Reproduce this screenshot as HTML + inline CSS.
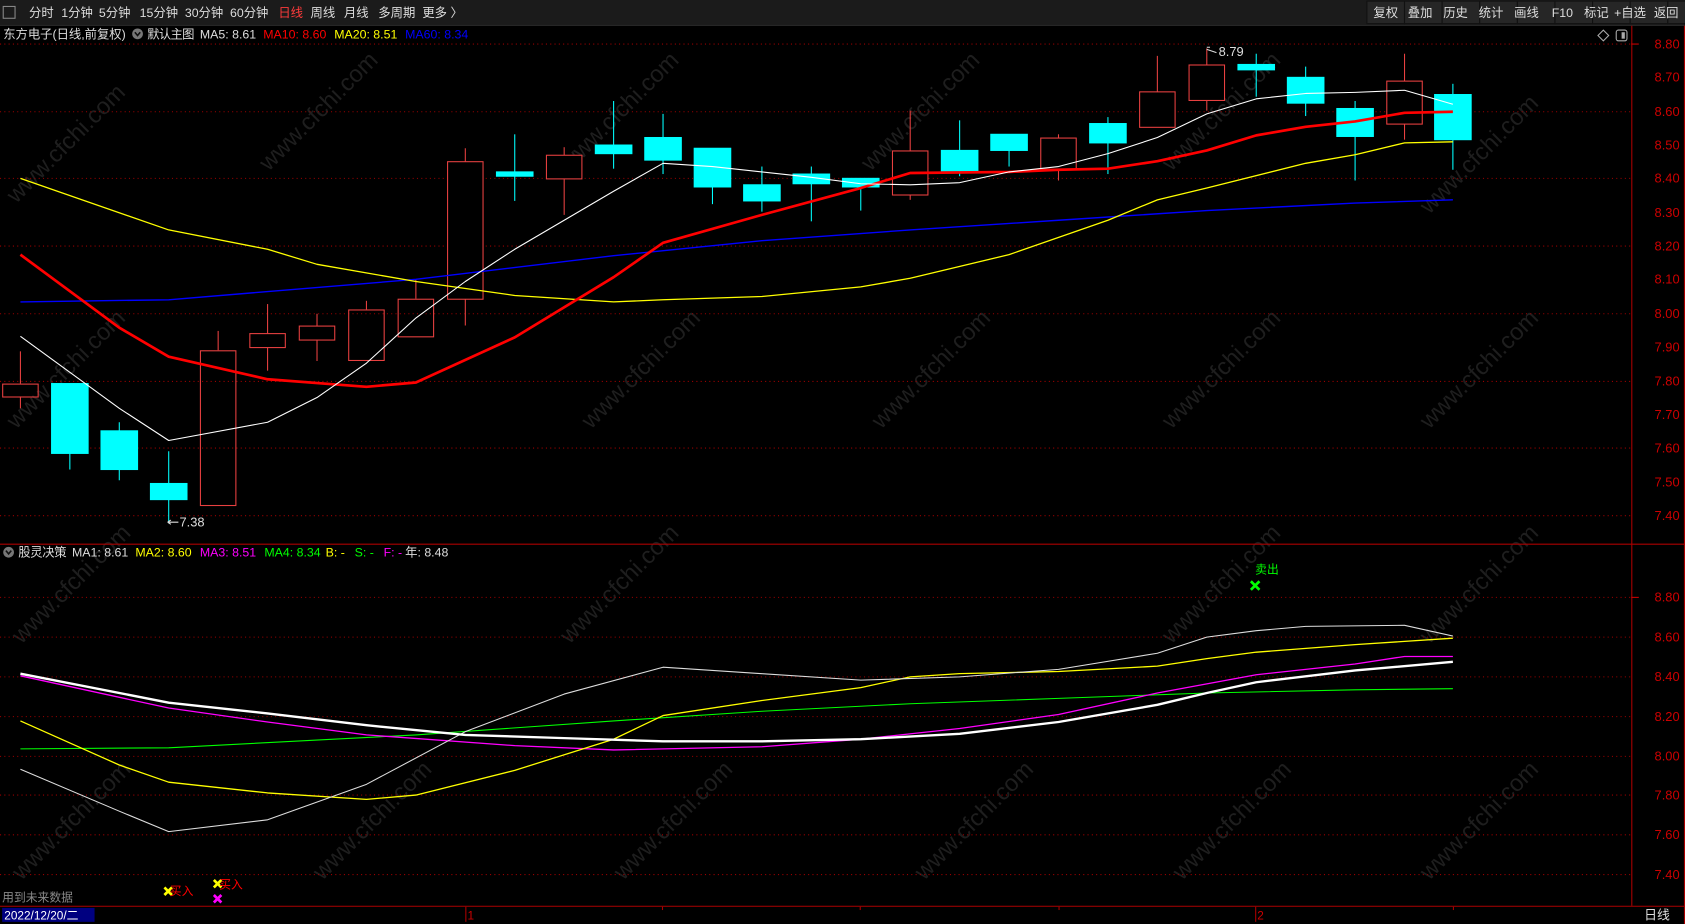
<!DOCTYPE html>
<html><head><meta charset="utf-8"><style>
html,body{margin:0;padding:0;background:#000;width:1685px;height:924px;overflow:hidden}
svg{display:block}
text{font-family:"Liberation Sans","Noto Sans CJK SC",sans-serif;font-size:12px}
.h text{font-size:11.5px}
.wm{font-size:22px;fill:#1e1e1e}
</style></head><body>
<svg width="1685" height="924" viewBox="0 0 1568 860" preserveAspectRatio="none" xmlns="http://www.w3.org/2000/svg">
<rect width="1568" height="860" fill="#000"/>
<!-- watermarks -->
<g class="wm" style="font-size:22px" fill="#1e1e1e">
<text transform="translate(15,190) rotate(-45)" style="font-size:22px;fill:#1e1e1e">www.cfchi.com</text>
<text transform="translate(250,160) rotate(-45)" style="font-size:22px;fill:#1e1e1e">www.cfchi.com</text>
<text transform="translate(530,160) rotate(-45)" style="font-size:22px;fill:#1e1e1e">www.cfchi.com</text>
<text transform="translate(810,160) rotate(-45)" style="font-size:22px;fill:#1e1e1e">www.cfchi.com</text>
<text transform="translate(1090,160) rotate(-45)" style="font-size:22px;fill:#1e1e1e">www.cfchi.com</text>
<text transform="translate(1330,200) rotate(-45)" style="font-size:22px;fill:#1e1e1e">www.cfchi.com</text>
<text transform="translate(15,400) rotate(-45)" style="font-size:22px;fill:#1e1e1e">www.cfchi.com</text>
<text transform="translate(550,400) rotate(-45)" style="font-size:22px;fill:#1e1e1e">www.cfchi.com</text>
<text transform="translate(820,400) rotate(-45)" style="font-size:22px;fill:#1e1e1e">www.cfchi.com</text>
<text transform="translate(1090,400) rotate(-45)" style="font-size:22px;fill:#1e1e1e">www.cfchi.com</text>
<text transform="translate(1330,400) rotate(-45)" style="font-size:22px;fill:#1e1e1e">www.cfchi.com</text>
<text transform="translate(20,600) rotate(-45)" style="font-size:22px;fill:#1e1e1e">www.cfchi.com</text>
<text transform="translate(530,600) rotate(-45)" style="font-size:22px;fill:#1e1e1e">www.cfchi.com</text>
<text transform="translate(1090,600) rotate(-45)" style="font-size:22px;fill:#1e1e1e">www.cfchi.com</text>
<text transform="translate(1330,600) rotate(-45)" style="font-size:22px;fill:#1e1e1e">www.cfchi.com</text>
<text transform="translate(20,820) rotate(-45)" style="font-size:22px;fill:#1e1e1e">www.cfchi.com</text>
<text transform="translate(300,820) rotate(-45)" style="font-size:22px;fill:#1e1e1e">www.cfchi.com</text>
<text transform="translate(580,820) rotate(-45)" style="font-size:22px;fill:#1e1e1e">www.cfchi.com</text>
<text transform="translate(860,820) rotate(-45)" style="font-size:22px;fill:#1e1e1e">www.cfchi.com</text>
<text transform="translate(1100,820) rotate(-45)" style="font-size:22px;fill:#1e1e1e">www.cfchi.com</text>
<text transform="translate(1330,820) rotate(-45)" style="font-size:22px;fill:#1e1e1e">www.cfchi.com</text>
</g>
<!-- toolbar -->
<rect x="0" y="0" width="1568" height="23" fill="#1b1b1b"/>
<line x1="0" y1="23.5" x2="1568" y2="23.5" stroke="#333"/>
<rect x="3" y="6" width="11" height="11" fill="none" stroke="#888"/>
<g fill="#ddd" class="h">
<text x="27" y="16">分时</text><text x="57" y="16">1分钟</text><text x="92" y="16">5分钟</text><text x="130" y="16">15分钟</text><text x="172" y="16">30分钟</text><text x="214" y="16">60分钟</text>
<text x="259" y="16" fill="#ff3b3b">日线</text><text x="289" y="16">周线</text><text x="320" y="16">月线</text><text x="352" y="16">多周期</text><text x="393" y="16">更多 〉</text>
</g>
<g fill="#262626" stroke="#111">
<rect x="1272" y="1" width="35" height="21"/><rect x="1307" y="1" width="35" height="21"/><rect x="1342" y="1" width="35" height="21"/><rect x="1377" y="1" width="35" height="21"/><rect x="1412" y="1" width="35" height="21"/><rect x="1447" y="1" width="35" height="21"/><rect x="1482" y="1" width="35" height="21"/><rect x="1517" y="1" width="35" height="21"/><rect x="1552" y="1" width="20" height="21"/>
</g>
<g fill="#ddd" class="h">
<text x="1278" y="16">复权</text><text x="1310" y="16">叠加</text><text x="1343" y="16">历史</text><text x="1376" y="16">统计</text><text x="1409" y="16">画线</text><text x="1444" y="16">F10</text><text x="1474" y="16">标记</text><text x="1502" y="16">+自选</text><text x="1539" y="16">返回</text>
</g>
<!-- header main -->
<g class="h">
<text x="3" y="36" fill="#ddd" textLength="114">东方电子(日线,前复权)</text>
<text x="137" y="36" fill="#ddd" textLength="44">默认主图</text>
<text x="186" y="36" fill="#ddd">MA5: 8.61</text>
<text x="245" y="36" fill="#f00">MA10: 8.60</text>
<text x="311" y="36" fill="#ff0">MA20: 8.51</text>
<text x="377" y="36" fill="#00f">MA60: 8.34</text>
</g>
<circle cx="128" cy="31.5" r="5" fill="#777"/><path d="M125.5 30 L128 33 L130.5 30" stroke="#111" stroke-width="1.5" fill="none"/>
<path d="M1492 28 L1497 33 L1492 38 L1487 33 Z" fill="none" stroke="#aaa"/>
<rect x="1504" y="28" width="10" height="10" rx="2" fill="none" stroke="#aaa"/><rect x="1509" y="30" width="3" height="6" fill="#aaa"/>
<!-- axis -->
<line x1="1518.5" y1="24" x2="1518.5" y2="843" stroke="#a00"/>
<line x1="1567.5" y1="24" x2="1567.5" y2="860" stroke="#a00"/>
<line x1="0" y1="506.5" x2="1568" y2="506.5" stroke="#a00"/>
<line x1="0" y1="843.5" x2="1568" y2="843.5" stroke="#a00"/>
<g stroke="#900" stroke-dasharray="1,3">
<line x1="0" y1="41" x2="1518" y2="41"/><line x1="0" y1="104" x2="1518" y2="104"/><line x1="0" y1="166" x2="1518" y2="166"/><line x1="0" y1="229" x2="1518" y2="229"/><line x1="0" y1="292" x2="1518" y2="292"/><line x1="0" y1="355" x2="1518" y2="355"/><line x1="0" y1="417" x2="1518" y2="417"/><line x1="0" y1="480" x2="1518" y2="480"/>
<line x1="0" y1="556" x2="1518" y2="556"/><line x1="0" y1="593" x2="1518" y2="593"/><line x1="0" y1="630" x2="1518" y2="630"/><line x1="0" y1="667" x2="1518" y2="667"/><line x1="0" y1="704" x2="1518" y2="704"/><line x1="0" y1="740" x2="1518" y2="740"/><line x1="0" y1="777" x2="1518" y2="777"/><line x1="0" y1="814" x2="1518" y2="814"/>
</g>
<g fill="#c00" text-anchor="end">
<text x="1563" y="45">8.80</text><text x="1563" y="76">8.70</text><text x="1563" y="108">8.60</text><text x="1563" y="139">8.50</text><text x="1563" y="170">8.40</text><text x="1563" y="202">8.30</text><text x="1563" y="233">8.20</text><text x="1563" y="264">8.10</text><text x="1563" y="296">8.00</text><text x="1563" y="327">7.90</text><text x="1563" y="359">7.80</text><text x="1563" y="390">7.70</text><text x="1563" y="421">7.60</text><text x="1563" y="453">7.50</text><text x="1563" y="484">7.40</text>
<text x="1563" y="560">8.80</text><text x="1563" y="597">8.60</text><text x="1563" y="634">8.40</text><text x="1563" y="671">8.20</text><text x="1563" y="708">8.00</text><text x="1563" y="744">7.80</text><text x="1563" y="781">7.60</text><text x="1563" y="818">7.40</text>
</g>
<g stroke="#c00"><line x1="1518" y1="41" x2="1525" y2="41"/><line x1="1518" y1="556" x2="1525" y2="556"/></g>
<!-- candles -->
<g stroke="#e84040" fill="none">
<line x1="19" y1="327" x2="19" y2="357"/><line x1="19" y1="369" x2="19" y2="380"/><rect x="2.5" y="357.5" width="33" height="12"/>
<line x1="203" y1="308" x2="203" y2="326"/><rect x="186.5" y="326.5" width="33" height="144"/>
<line x1="249" y1="283" x2="249" y2="345"/><rect x="232.5" y="310.5" width="33" height="13" fill="#000"/>
<line x1="295" y1="292" x2="295" y2="336"/><rect x="278.5" y="303.5" width="33" height="13" fill="#000"/>
<line x1="341" y1="280" x2="341" y2="288"/><rect x="324.5" y="288.5" width="33" height="47"/>
<line x1="387" y1="260" x2="387" y2="278"/><rect x="370.5" y="278.5" width="33" height="35"/>
<line x1="433" y1="138" x2="433" y2="303"/><rect x="416.5" y="150.5" width="33" height="128" fill="#000"/>
<line x1="525" y1="137" x2="525" y2="200"/><rect x="508.5" y="144.5" width="33" height="22" fill="#000"/>
<line x1="847" y1="103" x2="847" y2="186"/><rect x="830.5" y="140.5" width="33" height="41" fill="#000"/>
<line x1="985" y1="125" x2="985" y2="168"/><rect x="968.5" y="128.5" width="33" height="29" fill="#000"/>
<line x1="1077" y1="52" x2="1077" y2="118"/><rect x="1060.5" y="85.5" width="33" height="33" fill="#000"/>
<line x1="1123" y1="45" x2="1123" y2="103"/><rect x="1106.5" y="60.5" width="33" height="33" fill="#000"/>
<line x1="1307" y1="50" x2="1307" y2="130"/><rect x="1290.5" y="75.5" width="33" height="40" fill="#000"/>
</g>
<g stroke="#00ffff" fill="#00ffff">
<line x1="65" y1="357" x2="65" y2="437"/><rect x="48" y="357" width="34" height="65"/>
<line x1="111" y1="393" x2="111" y2="447"/><rect x="94" y="401" width="34" height="36"/>
<line x1="157" y1="420" x2="157" y2="487"/><rect x="140" y="450" width="34" height="15"/>
<line x1="479" y1="125" x2="479" y2="187"/><rect x="462" y="160" width="34" height="4"/>
<line x1="571" y1="94" x2="571" y2="157"/><rect x="554" y="135" width="34" height="8"/>
<line x1="617" y1="106" x2="617" y2="162"/><rect x="600" y="128" width="34" height="21"/>
<line x1="663" y1="138" x2="663" y2="190"/><rect x="646" y="138" width="34" height="36"/>
<line x1="709" y1="155" x2="709" y2="197"/><rect x="692" y="172" width="34" height="15"/>
<line x1="755" y1="155" x2="755" y2="206"/><rect x="738" y="162" width="34" height="9"/>
<line x1="801" y1="166" x2="801" y2="196"/><rect x="784" y="166" width="34" height="8"/>
<line x1="893" y1="112" x2="893" y2="164"/><rect x="876" y="140" width="34" height="19"/>
<line x1="939" y1="125" x2="939" y2="155"/><rect x="922" y="125" width="34" height="15"/>
<line x1="1031" y1="109" x2="1031" y2="162"/><rect x="1014" y="115" width="34" height="18"/>
<line x1="1169" y1="50" x2="1169" y2="90"/><rect x="1152" y="60" width="34" height="5"/>
<line x1="1215" y1="62" x2="1215" y2="108"/><rect x="1198" y="72" width="34" height="24"/>
<line x1="1261" y1="94" x2="1261" y2="168"/><rect x="1244" y="101" width="34" height="26"/>
<line x1="1352" y1="78" x2="1352" y2="158"/><rect x="1335" y="88" width="34" height="42"/>
</g>
<!-- MA lines main -->
<g fill="none" stroke-linejoin="round">
<polyline stroke="#00f" stroke-width="1.3" points="19,281 157,279 387,260 571,238 709,224 847,214 985,205 1123,196 1261,189 1352,186"/>
<polyline stroke="#ff0" stroke-width="1.2" points="19,166 157,214 249,232 295,246 387,262 479,275 571,281 617,279 709,276 801,267 847,259 939,237 1031,205 1077,186 1123,175 1215,152 1261,144 1307,133 1352,132"/>
<polyline stroke="#f00" stroke-width="2.5" points="19,237 111,305 157,332 249,353 341,360 387,356 479,314 571,258 617,226 709,200 801,175 847,161 939,160 985,158 1031,157 1077,150 1123,140 1169,126 1215,118 1261,113 1307,105 1352,104"/>
<polyline stroke="#fff" stroke-width="1" points="19,313 111,380 157,410 249,393 295,370 341,338 387,296 433,262 479,232 525,205 571,178 617,152 663,155 709,160 755,165 801,171 847,172 893,170 939,160 985,155 1031,143 1077,128 1123,106 1169,92 1215,87 1261,86 1307,84 1352,97"/>
</g>
<text x="167" y="490" fill="#ddd">7.38</text><path d="M156 486 H166 M156 486 l3 -2 M156 486 l3 2" stroke="#ddd"/>
<text x="1134" y="52" fill="#ddd">8.79</text><path d="M1123 46 l9 3 M1123 44 l3 0" stroke="#ddd"/>
<!-- lower header -->
<circle cx="8" cy="514" r="5" fill="#777"/><path d="M5.5 512.5 L8 515.5 L10.5 512.5" stroke="#111" stroke-width="1.5" fill="none"/>
<g class="h">
<text x="17" y="518" fill="#ddd" textLength="45">股灵决策</text>
<text x="67" y="518" fill="#ddd">MA1: 8.61</text>
<text x="126" y="518" fill="#ff0">MA2: 8.60</text>
<text x="186" y="518" fill="#f0f">MA3: 8.51</text>
<text x="246" y="518" fill="#0f0">MA4: 8.34</text>
<text x="303" y="518" fill="#ff0">B: -</text>
<text x="330" y="518" fill="#0f0">S: -</text>
<text x="357" y="518" fill="#f0f">F: -</text>
<text x="377" y="518" fill="#ddd">年: 8.48</text>
</g>
<!-- lower lines -->
<g fill="none" stroke-linejoin="round">
<polyline stroke="#0f0" stroke-width="1" points="19,697 157,696 387,684 571,671 709,662 847,655 985,650 1123,645 1261,642 1352,641"/>
<polyline stroke="#f0f" stroke-width="1.2" points="19,629 157,659 249,672 341,684 479,694 571,698 709,695 801,688 893,678 985,665 1077,645 1169,628 1261,618 1307,611 1352,611"/>
<polyline stroke="#ff0" stroke-width="1.2" points="19,671 111,712 157,728 249,738 341,744 387,740 479,717 571,688 617,666 709,652 801,640 847,630 893,627 985,625 1077,620 1123,613 1169,607 1261,600 1352,594"/>
<polyline stroke="#ddd" stroke-width="1" points="19,716 111,755 157,774 249,763 341,730 433,681 525,646 617,621 709,627 801,633 893,630 985,623 1077,608 1123,593 1169,587 1215,583 1307,582 1352,592"/>
<polyline stroke="#fff" stroke-width="2.2" points="19,627 157,654 249,664 341,675 433,684 525,687 617,690 709,690 801,688 893,683 985,672 1077,656 1123,645 1169,635 1261,624 1352,616"/>
</g>
<text x="1168" y="534" fill="#0f0" style="font-size:11px">卖出</text>
<path d="M1164 541 l8 8 M1172 541 l-8 8" stroke="#0f0" stroke-width="2.5"/>
<path d="M153 826 l7 7 M160 826 l-7 7" stroke="#ff0" stroke-width="2.5"/>
<text x="158" y="833" fill="#f00" style="font-size:11px">买入</text>
<path d="M199 819 l7 7 M206 819 l-7 7" stroke="#ff0" stroke-width="2.5"/>
<text x="204" y="827" fill="#f00" style="font-size:11px">买入</text>
<path d="M199 833 l7 7 M206 833 l-7 7" stroke="#f0f" stroke-width="2.5"/>
<text x="2" y="839" fill="#888" style="font-size:11px">用到未来数据</text>
<!-- bottom bar -->
<rect x="2" y="845" width="86" height="13" fill="#000080"/>
<text x="4" y="856" fill="#fff" style="font-size:11px">2022/12/20/二</text>
<line x1="433.5" y1="844" x2="433.5" y2="858" stroke="#a00"/><text x="435" y="856" fill="#c00" style="font-size:11px">1</text>
<line x1="1168.5" y1="844" x2="1168.5" y2="858" stroke="#a00"/><text x="1170" y="856" fill="#c00" style="font-size:11px">2</text>
<g stroke="#a00"><line x1="616.5" y1="844" x2="616.5" y2="847"/><line x1="800.5" y1="844" x2="800.5" y2="847"/><line x1="985.5" y1="844" x2="985.5" y2="847"/><line x1="1352.5" y1="844" x2="1352.5" y2="847"/></g>
<text x="1530" y="856" fill="#ddd">日线</text>
</svg>
</body></html>
